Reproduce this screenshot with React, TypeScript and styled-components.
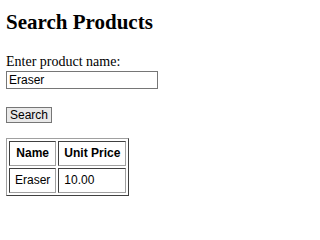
import styled, { createGlobalStyle } from "styled-components"

interface Product {
  name: string
  price: string
}

const products: Product[] = [{ name: "Eraser", price: "10.00" }]

export default function App() {
  return (
    <>
      <GlobalStyle />
      <Page>
        <Title>Search Products</Title>
        <SearchForm onSubmit={(e: React.FormEvent) => e.preventDefault()}>
          <FieldLabel htmlFor="product">Enter product name:</FieldLabel>
          <TextInput id="product" type="text" defaultValue="Eraser" />
          <SearchButton type="submit">Search</SearchButton>
        </SearchForm>
        <ResultTable>
          <thead>
            <tr>
              <HeadCell>Name</HeadCell>
              <HeadCell>Unit Price</HeadCell>
            </tr>
          </thead>
          <tbody>
            {products.map((p) => (
              <tr key={p.name}>
                <BodyCell>{p.name}</BodyCell>
                <BodyCell>{p.price}</BodyCell>
              </tr>
            ))}
          </tbody>
        </ResultTable>
      </Page>
    </>
  )
}

//style

const GlobalStyle = createGlobalStyle`
  body {
    margin: 0;
    background: #fff;
    color: #000;
    font-family: "Liberation Serif", "Times New Roman", serif;
  }
`

const Page = styled.div`
  display: flex;
  flex-direction: column;
  align-items: flex-start;
  padding: 10px 6px;
`

const Title = styled.h2`
  margin: 0 0 18.5px;
  font-size: 21px;
  font-weight: bold;
  line-height: normal;
`

const SearchForm = styled.form`
  display: flex;
  flex-direction: column;
  align-items: flex-start;
  margin: 0;
`

const FieldLabel = styled.label`
  font-size: 14px;
  line-height: normal;
`

const TextInput = styled.input`
  box-sizing: border-box;
  width: 152px;
  height: 18px;
  margin: 1.3px 0 0;
  padding: 0 2px;
  border: 1px solid #767676;
  border-radius: 0;
  outline: none;
  font-family: "Liberation Sans", Arial, sans-serif;
  font-size: 12px;
  color: #000;
`

const SearchButton = styled.button`
  box-sizing: border-box;
  height: 16.5px;
  margin-top: 18px;
  padding: 0 3px;
  border: 1px solid #767676;
  border-radius: 0;
  background: #e9e9e9;
  font-family: "Liberation Sans", Arial, sans-serif;
  font-size: 12px;
  line-height: 1;
  color: #000;
`

const ResultTable = styled.table`
  margin-top: 14.5px;
  border-collapse: separate;
  border-spacing: 2px;
  border: 1px solid;
  border-color: #a0a0a0 #404040 #404040 #a0a0a0;
  font-family: "Liberation Sans", Arial, sans-serif;
  font-size: 12px;
`

const cellBox = `
  padding: 4.5px 5px;
  border: 1px solid;
  border-color: #404040 #a0a0a0 #a0a0a0 #404040;
`

const HeadCell = styled.th`
  ${cellBox}
  font-weight: bold;
  text-align: center;
`

const BodyCell = styled.td`
  ${cellBox}
  text-align: left;
`
